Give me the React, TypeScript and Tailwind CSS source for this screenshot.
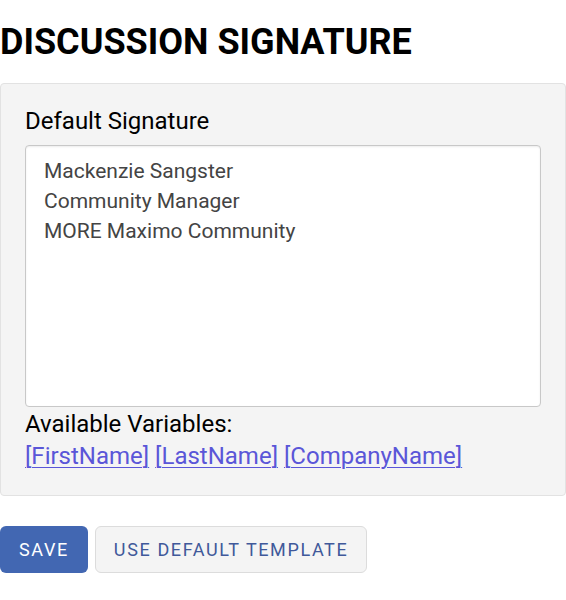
const variables = ["[FirstName]", "[LastName]", "[CompanyName]"];

const signature = `Mackenzie Sangster
Community Manager
MORE Maximo Community`;

export default function App() {
  return (
    <div className="min-h-screen bg-white font-['Roboto','Liberation_Sans',sans-serif]">
      <h1 className="pt-[20px] text-[36px] font-bold leading-[44px] text-black">
        DISCUSSION SIGNATURE
      </h1>

      <div className="mt-[19px] rounded border border-[#e2e2e2] bg-[#f4f4f4] px-6 pt-[22px] pb-[24px]">
        <label className="block text-[24px] leading-[30px] text-black">
          Default Signature
        </label>
        <textarea
          defaultValue={signature}
          className="mt-[9px] block h-[262px] w-full resize-none rounded border border-[#c8c8c8] bg-white px-[18px] pt-[10px] pb-[6px] text-[21px] leading-[30px] text-[#444] shadow-[inset_0_1px_2px_rgba(0,0,0,0.08)] outline-none"
        />
        <div className="mt-[2px] text-[24px] leading-[30px] text-black">
          Available Variables:
        </div>
        <div className="mt-[2px] text-[24px] leading-[30px]">
          {variables.map((v, i) => (
            <span key={v}>
              {i > 0 && " "}
              <a href="#" className="text-[#5a56d8] underline decoration-1 underline-offset-[3px]">
                {v}
              </a>
            </span>
          ))}
        </div>
      </div>

      <div className="mt-[30px] flex gap-[7px]">
        <button className="h-[47px] rounded-md bg-[#4267b2] px-[19px] text-[18px] tracking-[0.09em] text-white">
          SAVE
        </button>
        <button className="h-[47px] rounded-md border border-[#dcdcdc] bg-[#f4f4f4] px-[18px] text-[18px] tracking-[0.09em] text-[#40599a]">
          USE DEFAULT TEMPLATE
        </button>
      </div>
    </div>
  );
}
